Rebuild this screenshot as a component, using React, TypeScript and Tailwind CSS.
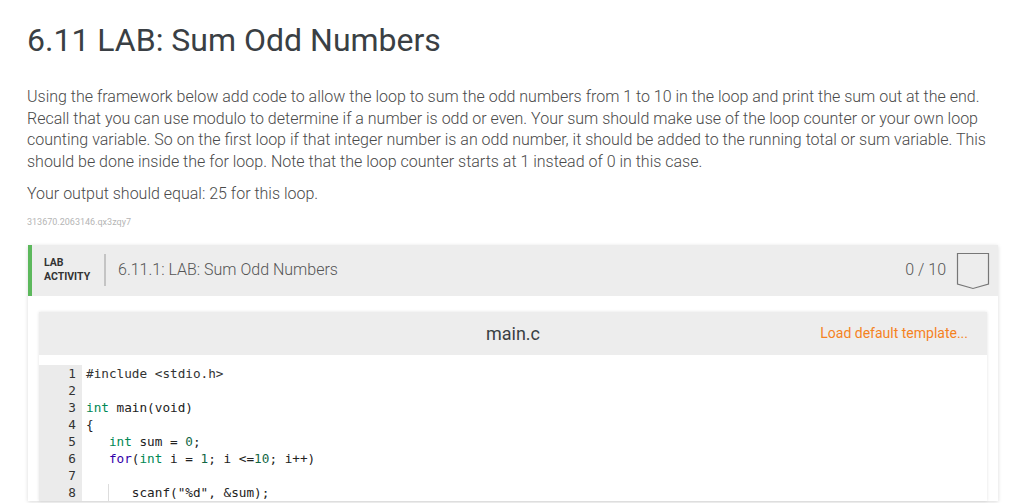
import React from 'react';

const codeLines: React.ReactNode[] = [
  <><span className="text-[#333]">#include &lt;stdio.h&gt;</span></>,
  <>&nbsp;</>,
  <><span className="text-[#008855]">int</span> main(void)</>,
  <>{'{'}</>,
  <>   <span className="text-[#008855]">int</span> sum = <span className="text-[#116644]">0</span>;</>,
  <>   <span className="text-[#3300aa]">for</span>(<span className="text-[#008855]">int</span> i = <span className="text-[#116644]">1</span>; i &lt;=<span className="text-[#116644]">10</span>; i++)</>,
  <>&nbsp;</>,
  <>      scanf("%d", &amp;sum);</>,
];

export default function App() {
  return (
    <div className="min-h-screen bg-white font-['Roboto',sans-serif] text-[#333]">
      <div className="pl-[27px] pt-[20px] w-[1000px]">
        <h1 className="text-[32px] leading-[40px] text-[#3a3f44] font-normal">6.11 LAB: Sum Odd Numbers</h1>

        <p className="mt-[26px] w-[968px] text-[16px] leading-[21.5px] font-light text-[#4a4a4a]">
          Using the framework below add code to allow the loop to sum the odd numbers from 1 to 10 in the loop and print the sum out at the end. Recall that you can use modulo to determine if a number is odd or even. Your sum should make use of the loop counter or your own loop counting variable. So on the first loop if that integer number is an odd number, it should be added to the running total or sum variable. This should be done inside the for loop. Note that the loop counter starts at 1 instead of 0 in this case.
        </p>
        <p className="mt-[11px] text-[16px] leading-[21.5px] font-light text-[#4a4a4a]">Your output should equal: 25 for this loop.</p>
        <div className="mt-[11px] text-[9px] leading-[12px] text-[#b5b5b5]">313670.2063146.qx3zqy7</div>

        <div className="mt-[17px] ml-[1px] w-[970px] bg-white shadow-[0_1px_4px_rgba(0,0,0,0.15)]">
          <div className="flex items-center h-[51px] bg-[#ededed] border-l-4 border-[#5cb85c]">
            <div className="pl-[12px] text-[10.5px] leading-[14px] font-bold text-[#333] w-[72px]">
              LAB<br />ACTIVITY
            </div>
            <div className="w-[2px] h-[32px] bg-[#c4c4c4]" />
            <div className="pl-[12px] text-[16px] font-light text-[#555] flex-1">6.11.1: LAB: Sum Odd Numbers</div>
            <div className="text-[16px] font-light text-[#555] mr-[10px]">0 / 10</div>
            <svg width="34" height="38" viewBox="0 0 34 38" className="mr-[8px] mt-[2px]">
              <path d="M1.5 1.5 H32.5 V32 L17 36.5 L1.5 32 Z" fill="none" stroke="#777" strokeWidth="1.2" />
            </svg>
          </div>

          <div className="px-[11px] pt-[16px]">
            <div className="bg-[#ededed] shadow-[0_0_3px_rgba(0,0,0,0.12)]">
              <div className="relative flex items-center justify-center h-[43px]">
                <span className="text-[18px] text-[#3a3f44]">main.c</span>
                <span className="absolute right-[19px] text-[14px] text-[#f5821f]">Load default template...</span>
              </div>
              <div className="flex bg-white pt-[10px] font-['DejaVu_Sans_Mono',monospace] text-[12.7px] leading-[17px] text-[#222]">
                <div className="w-[43px] bg-[#ebebeb] pr-[6px] text-right text-[#333]">
                  {codeLines.map((_, i) => (
                    <div key={i}>{i + 1}</div>
                  ))}
                </div>
                <div className="pl-[4px] whitespace-pre relative">
                  {codeLines.map((l, i) => (
                    <div key={i} className="relative">
                      {i === 7 && <span className="absolute left-[22px] top-0 h-full w-px bg-[#ddd]" />}
                      {l}
                    </div>
                  ))}
                </div>
              </div>
            </div>
          </div>
        </div>
      </div>
    </div>
  );
}
